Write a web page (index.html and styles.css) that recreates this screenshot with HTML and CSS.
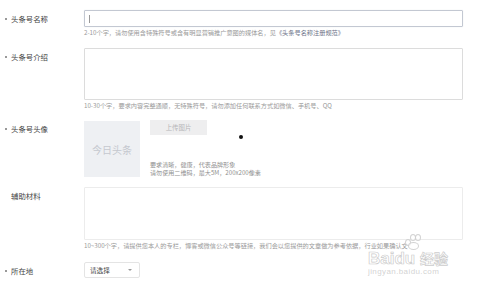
FILE: index.html
```html
<!DOCTYPE html>
<html>
<head>
<meta charset="utf-8">
<link rel="stylesheet" href="styles.css">
</head>
<body>
<div class="form">
  <div class="row r1">
    <div class="label"><span class="dot"></span>头条号名称</div>
    <div class="field">
      <div class="input focus"><span class="caret"></span></div>
      <div class="hint">2-10个字，请勿使用含特殊符号或含有明显营销推广意图的媒体名，见<span class="link">《头条号名称注册规范》</span></div>
    </div>
  </div>
  <div class="row r2">
    <div class="label"><span class="dot"></span>头条号介绍</div>
    <div class="field">
      <div class="textarea"></div>
      <div class="hint">10-30个字，要求内容完整通顺，无特殊符号，请勿添加任何联系方式如微信、手机号、QQ</div>
    </div>
  </div>
  <div class="row r3">
    <div class="label"><span class="dot"></span>头条号头像</div>
    <div class="field avatar-field">
      <div class="avatar">今日头条</div>
      <div class="avatar-side">
        <div class="upload">上传图片</div>
        <div class="ahint">要求清晰，健康，代表品牌形象<br>请勿使用二维码，最大5M，200x200像素</div>
      </div>
      <span class="cursor"></span>
    </div>
  </div>
  <div class="row r4">
    <div class="label"><span class="dot blank"></span>辅助材料</div>
    <div class="field">
      <div class="textarea light"></div>
      <div class="hint">10~300个字，请提供您本人的专栏，博客或微信公众号等链接，我们会以您提供的文章做为参考依据，行业如果确认文</div>
    </div>
  </div>
  <div class="row r5">
    <div class="label"><span class="dot"></span>所在地</div>
    <div class="field">
      <div class="select">请选择<span class="arrow"></span></div>
    </div>
  </div>
</div>
<div class="watermark">
  <div class="paw"><i></i><i></i><i></i><b></b></div>
  <div class="wm-top">Bai<span class="du">du</span> <span class="jy">经验</span></div>
  <div class="wm-url">jingyan.baidu.com</div>
</div>
</body>
</html>
```
FILE: styles.css
```css
html, body {
  margin: 0;
  padding: 0;
  background: #fff;
  width: 480px;
  height: 283px;
  overflow: hidden;
}
body {
  font-family: "Noto Sans CJK SC", "Liberation Sans", sans-serif;
  color: #333;
  position: relative;
}
.form {
  padding-top: 10px;
  display: flex;
  flex-direction: column;
}
.row {
  display: flex;
  align-items: flex-start;
}
.r2 { margin-top: 10px; }
.r3 { margin-top: 9px; }
.r4 { margin-top: 10px; }
.r5 { margin-top: 11px; }
.label {
  width: 84px;
  box-sizing: border-box;
  padding-left: 5px;
  font-size: 7.4px;
  line-height: 17px;
  color: #444;
  display: flex;
  align-items: center;
  white-space: nowrap;
}
.dot {
  width: 2px;
  height: 2px;
  border-radius: 50%;
  background: #777;
  margin-right: 4px;
}
.dot.blank { background: transparent; }
.field {
  width: 379px;
  display: flex;
  flex-direction: column;
}
.input {
  height: 17px;
  box-sizing: border-box;
  border: 1px solid #d6d8dc;
  border-radius: 1px;
  display: flex;
  align-items: center;
  padding-left: 4px;
}
.input.focus {
  border-color: #c3c8d2;
  box-shadow: 0 0 1px #d6dae2;
}
.caret {
  width: 1px;
  height: 8px;
  background: #999;
}
.textarea {
  height: 52px;
  box-sizing: border-box;
  border: 1px solid #dcdcdc;
  border-radius: 1px;
}
.textarea.light {
  height: 53px;
  border-color: #ececec;
}
.hint {
  font-size: 6.2px;
  line-height: 10px;
  color: #9a9a9a;
  white-space: nowrap;
  margin-top: 1px;
}
.link { color: #6d7388; }
.avatar-field {
  flex-direction: row;
  position: relative;
}
.avatar {
  width: 56px;
  height: 56px;
  margin-top: 1px;
  background: #eef0f3;
  color: #c5c8cf;
  font-size: 10px;
  display: flex;
  align-items: center;
  justify-content: center;
}
.avatar-side {
  margin-left: 10px;
  display: flex;
  flex-direction: column;
}
.upload {
  width: 57px;
  height: 15px;
  background: #eeeeef;
  color: #b5b5b8;
  font-size: 6.4px;
  display: flex;
  align-items: center;
  justify-content: center;
}
.ahint {
  margin-top: 26px;
  font-size: 6.1px;
  line-height: 8px;
  color: #8f8f8f;
  white-space: nowrap;
}
.cursor {
  position: absolute;
  left: 155px;
  top: 15px;
  width: 4px;
  height: 4px;
  border-radius: 50%;
  background: #111;
}
.select {
  width: 56px;
  height: 16px;
  box-sizing: border-box;
  border: 1px solid #e4e4e4;
  border-radius: 2px;
  font-size: 6.6px;
  color: #444;
  display: flex;
  align-items: center;
  padding-left: 5px;
  position: relative;
}
.arrow {
  position: absolute;
  right: 7px;
  top: 6px;
  width: 0;
  height: 0;
  border-left: 2px solid transparent;
  border-right: 2px solid transparent;
  border-top: 2px solid #999;
}
.watermark {
  position: absolute;
  left: 368px;
  top: 234px;
  width: 100px;
  color: rgba(205, 205, 205, 0.75);
  font-family: "Liberation Sans", sans-serif;
}
.paw {
  position: absolute;
  left: 36px;
  top: 0;
  width: 20px;
  height: 16px;
}
.paw i, .paw b {
  position: absolute;
  border: 1px solid rgba(200,200,200,0.8);
  border-radius: 50%;
  background: rgba(255,255,255,0.6);
}
.paw i { width: 4px; height: 5px; top: 2px; }
.paw i:nth-child(1) { left: 1px; top: 5px; }
.paw i:nth-child(2) { left: 6px; top: 0; }
.paw i:nth-child(3) { left: 11px; top: 0; }
.paw b { width: 9px; height: 6px; left: 4px; top: 8px; }
.wm-top {
  margin-top: 16px;
  font-size: 17px;
  line-height: 16px;
  font-weight: bold;
  color: transparent;
  -webkit-text-stroke: 0.7px rgba(190,190,190,0.8);
  white-space: nowrap;
}
.wm-top .jy {
  font-family: "Noto Sans CJK SC", sans-serif;
  font-size: 14px;
}
.wm-url {
  font-size: 8px;
  line-height: 10px;
  color: rgba(200,200,200,0.8);
  letter-spacing: 0.4px;
}
```
